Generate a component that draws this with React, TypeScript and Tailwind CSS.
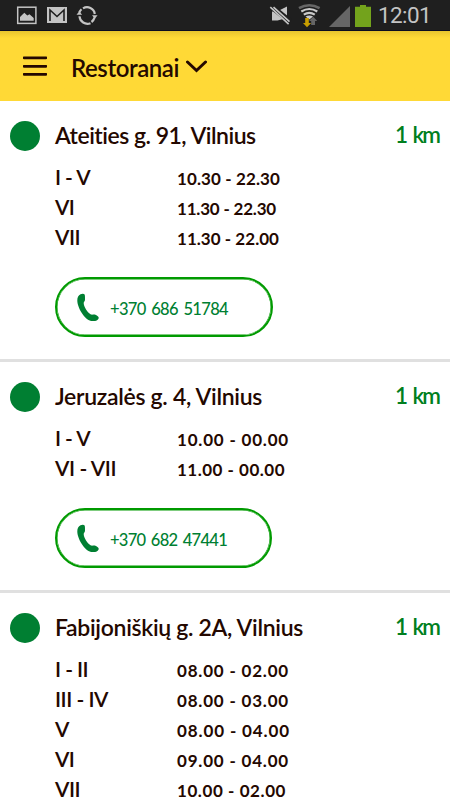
import { useLayoutEffect, useRef } from "react";

// Text tracked so that it occupies exactly the given width.
function Fit({ text, width, className = "" }: { text: string; width: number; className?: string }) {
  const ref = useRef<HTMLSpanElement>(null);
  useLayoutEffect(() => {
    const el = ref.current;
    if (!el) return;
    el.style.letterSpacing = "0px";
    const natural = el.getBoundingClientRect().width;
    el.style.letterSpacing = `${(width - natural) / text.length}px`;
  }, [text, width]);
  return (
    <span ref={ref} className={`inline-block whitespace-pre ${className}`}>
      {text}
    </span>
  );
}

type Hours = [string, number, string, number];
type Place = { name: string; nameWidth: number; hours: Hours[]; phone?: string; phoneWidth?: number; button?: string; size: string };

const places: Place[] = [
  {
    name: "Ateities g. 91, Vilnius",
    nameWidth: 201,
    size: "h-[261px]",
    hours: [
      ["I - V", 35, "10.30 - 22.30", 103],
      ["VI", 19, "11.30 - 22.30", 99],
      ["VII", 25, "11.30 - 22.00", 102],
    ],
    phone: "+370 686 51784",
    phoneWidth: 118,
    button: "w-[218px]",
  },
  {
    name: "Jeruzalės g. 4, Vilnius",
    nameWidth: 207,
    size: "h-[231px]",
    hours: [
      ["I - V", 35, "10.00 - 00.00", 112],
      ["VI - VII", 61, "11.00 - 00.00", 108],
    ],
    phone: "+370 682 47441",
    phoneWidth: 117,
    button: "w-[217px]",
  },
  {
    name: "Fabijoniškių g. 2A, Vilnius",
    nameWidth: 248,
    size: "h-[231px]",
    hours: [
      ["I - II", 33, "08.00 - 02.00", 112],
      ["III - IV", 53, "08.00 - 03.00", 112],
      ["V", 13, "08.00 - 04.00", 113],
      ["VI", 19, "09.00 - 04.00", 112],
      ["VII", 25, "10.00 - 02.00", 109],
    ],
  },
];

function StatusBar() {
  return (
    <div className="flex h-[31px] items-start border-b border-[#0b0b20] bg-[#1f1f1f]">
      <svg width="110" height="30" viewBox="0 0 110 30">
        <rect x="17.7" y="7.2" width="18.2" height="16.2" fill="none" stroke="#c4c4c4" strokeWidth="1.5" />
        <path d="M20 20.8V17l4.300-4.200 3 2.700 2.200-1.300L33.700 18v2.800z" fill="#c4c4c4" />
        <rect x="47" y="7" width="20" height="16" fill="#c4c4c4" />
        <path d="M50 21V10l7 6.500 7-6.500v11" fill="none" stroke="#1f1f1f" strokeWidth="1.6" />
        <path d="M83 8.400a7.800 7.800 0 0 1 11.800 5.600M94.500 17.500a8 8 0 0 1-3 4.500M90.500 23.200a8 8 0 0 1-11-7M79.300 12.500a8 8 0 0 1 2.200-3.200" fill="none" stroke="#c4c4c4" strokeWidth="2.2" />
        <path d="M92 15.300h5.600l-2.800 3.500zM76.500 14.800h5.600l-2.800-3.500z" fill="#c4c4c4" />
      </svg>
      <svg className="ml-auto" width="110" height="30" viewBox="265 0 110 30">
        <path d="M272 11.500h5l10-5v15l-4-2.500-5.500 1.500H272z" fill="#c4c4c4" />
        <path d="M271.500 6.500 290 21.500" stroke="#1f1f1f" strokeWidth="5.500" />
        <path d="M270.300 7.200 288.600 24.200M273.500 7.200l16 14.500" stroke="#c4c4c4" strokeWidth="1.6" />
        <path d="M299 8.200q10.300-6 20.600 0" fill="none" stroke="#666" strokeWidth="2.600" />
        <path d="M301.300 11.500q8-5 16 0M303.800 14.600q5.500-3.500 11 0" fill="none" stroke="#c9c9c9" strokeWidth="2.200" />
        <path d="M305.500 16.400q3.800-2 7.600 0l-3.800 3z" fill="#c9c9c9" />
        <path d="M305.200 18h3.600v5h2.300l-4.100 4.200-4-4.200h2.200z" fill="#c99f00" />
        <path d="M311.200 25v-4H309l4.200-4.300 4 4.300H315v4z" fill="#666" />
        <path d="M329 27 350 6v21z" fill="#666" />
        <path d="M355 6.800h5V5h6v1.800h5V27h-16z" fill="#73a31c" />
      </svg>
      <div className="w-[75px] pl-[3px] font-['Roboto',sans-serif] text-[22.5px] leading-[31px] text-[#c4c4c4]">
        <Fit text="12:01" width={53} />
      </div>
    </div>
  );
}

function Header() {
  return (
    <header className="flex h-[70px] items-center bg-[#ffd936] bg-linear-to-b from-[#e8c42f] to-[#ffd936] to-10% pl-[23px]">
      <svg width="24" height="20" viewBox="0 0 24 20">
        <path d="M1 2h22M1 10.500h22M1 18.500h22" transform="translate(0 -.2)" stroke="#240800" strokeWidth="2.700" strokeLinecap="round" />
      </svg>
      <h1 className="ml-6 pt-[3px] text-[24px] leading-8 font-semibold">
        <Fit text="Restoranai" width={108} />
      </h1>
      <svg className="ml-[7px]" width="21" height="14" viewBox="0 0 21 14">
        <path d="M1.500 3 10.500 11.500 19.500 3" fill="none" stroke="#240800" strokeWidth="3" strokeLinecap="round" />
      </svg>
    </header>
  );
}

function PlaceCard({ place }: { place: Place }) {
  return (
    <section className={`shrink-0 border-b-[3px] border-[#e0e0e0] pt-5 ${place.size}`}>
      <div className="flex h-[30px] items-center pr-[11px] pl-[10px]">
        <span className="size-[30px] rounded-full bg-[#007f32]" />
        <h2 className="ml-[15px] pb-0.5 text-[23px] leading-[30px] font-semibold">
          <Fit text={place.name} width={place.nameWidth} />
        </h2>
        <span className="ml-auto pb-0.5 text-[22.5px] leading-[30px] font-semibold text-[#007f20] [word-spacing:3px]">
          <Fit text="1 km" width={44} />
        </span>
      </div>
      <dl className="mt-[11px] pl-[55px]">
        {place.hours.map(([days, dw, time, tw]) => (
          <div key={days} className="flex h-[30px] items-baseline leading-[30px]">
            <dt className="w-[122px] text-[21px] font-semibold">
              <Fit text={days} width={dw} />
            </dt>
            <dd className="text-[17px] font-bold">
              <Fit text={time} width={tw} />
            </dd>
          </div>
        ))}
      </dl>
      {place.phone && (
        <button className={`mt-[25px] ml-[55px] flex h-[60px] items-center rounded-full border-2 border-[#009a00] pl-[20px] text-[#007f32] shadow-[inset_0_0_0_0.5px_#009a00] ${place.button}`}>
          <svg className="mt-[2px]" width="22" height="30" viewBox="0 0 22 30">
            <path d="M3.500 1.200C5 .5 7 .3 7.600 1.500c.5 1 .4 3.500.4 5.200 0 1.500-1.300 2-1.300 3.300 0 3.500 3.600 9.200 6.800 11.300 1.800 1 3-.4 5.500.8 1.600.8 3 2 2.700 3.200-.7 2.600-4.500 3.200-7.600 2.600C7.500 26.500.2 14.500.3 7.200.3 4.500 1.500 2 3.500 1.200z" fill="currentColor" />
          </svg>
          <span className="ml-[11px] pt-1 text-[16.5px] font-medium [word-spacing:2px]">
            <Fit text={place.phone} width={place.phoneWidth ?? 118} />
          </span>
        </button>
      )}
    </section>
  );
}

export default function App() {
  return (
    <div className="flex h-[800px] w-[450px] flex-col overflow-hidden bg-white font-['Lato',sans-serif] text-[#240800]">
      <StatusBar />
      <Header />
      <main className="flex flex-1 flex-col overflow-hidden">
        {places.map((p) => (
          <PlaceCard key={p.name} place={p} />
        ))}
      </main>
    </div>
  );
}
